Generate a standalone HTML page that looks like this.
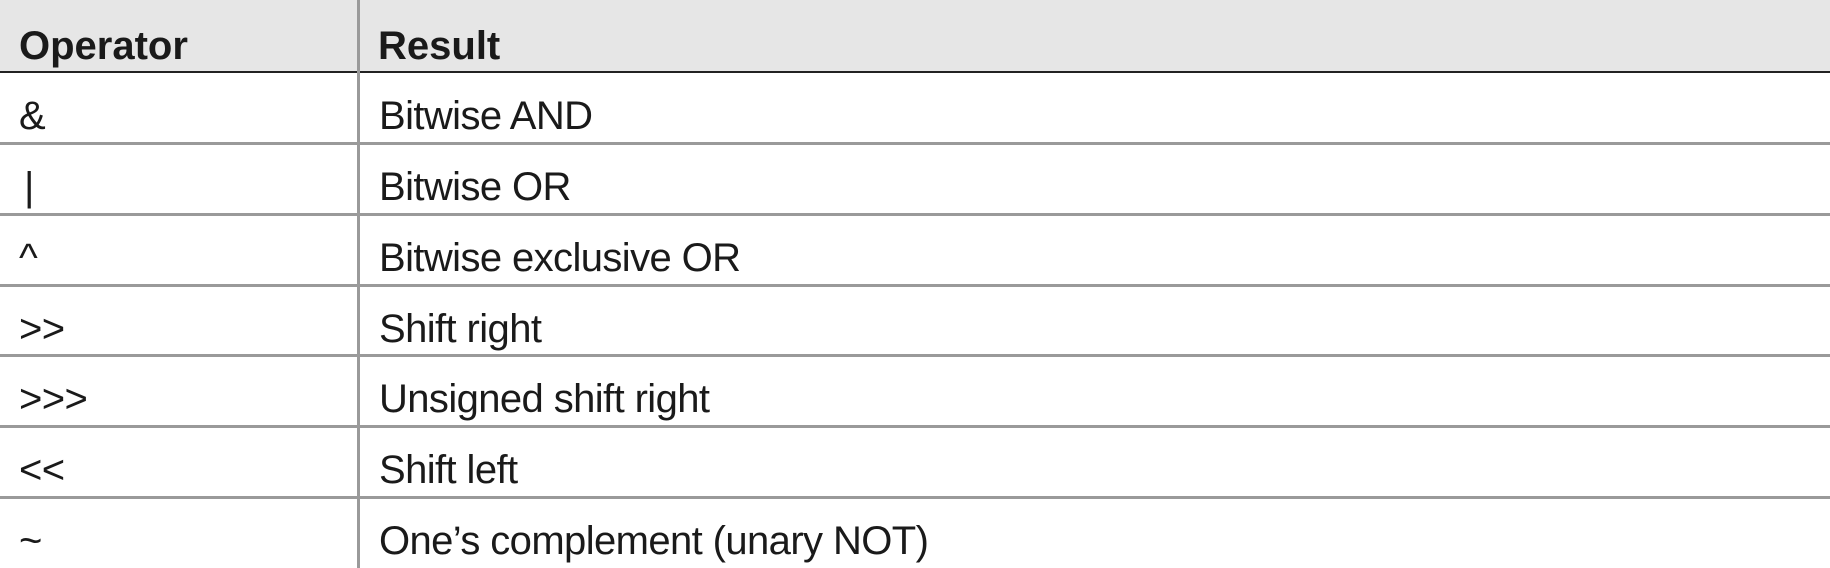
<!DOCTYPE html>
<html><head><meta charset="utf-8"><style>
html,body{margin:0;padding:0;background:#fff;}
body{width:1830px;height:568px;position:relative;overflow:hidden;font-family:"Liberation Sans",sans-serif;color:#1a1a1a;}
.hdr{position:absolute;left:0;top:0;width:1830px;height:71px;background:#e6e6e6;}
.hl{position:absolute;left:0;top:71px;width:1830px;height:2px;background:#222;}
.rl{position:absolute;left:0;width:1830px;height:3px;background:#9a9a9a;}
.vl{position:absolute;left:357px;top:0;width:3px;height:568px;background:#9a9a9a;}
.t{position:absolute;font-size:40px;line-height:40px;white-space:nowrap;letter-spacing:-0.6px;}
.b{font-weight:bold;letter-spacing:0;}
</style></head><body>
<div class="hdr"></div>
<div class="hl"></div>
<div class="rl" style="top:142px"></div>
<div class="rl" style="top:213px"></div>
<div class="rl" style="top:284px"></div>
<div class="rl" style="top:354px"></div>
<div class="rl" style="top:425px"></div>
<div class="rl" style="top:496px"></div>
<div class="vl"></div>

<div class="t b" style="left:19px;top:26px">Operator</div>
<div class="t b" style="left:378px;top:26px">Result</div>

<div class="t" style="left:19px;top:96px">&amp;</div>
<div class="t" style="left:379px;top:96px">Bitwise AND</div>
<div class="t" style="left:24px;top:167px">|</div>
<div class="t" style="left:379px;top:167px">Bitwise OR</div>
<div class="t" style="left:19px;top:238px">^</div>
<div class="t" style="left:379px;top:238px">Bitwise exclusive OR</div>
<div class="t" style="left:19px;top:309px">&gt;&gt;</div>
<div class="t" style="left:379px;top:309px">Shift right</div>
<div class="t" style="left:19px;top:379px">&gt;&gt;&gt;</div>
<div class="t" style="left:379px;top:379px">Unsigned shift right</div>
<div class="t" style="left:19px;top:450px">&lt;&lt;</div>
<div class="t" style="left:379px;top:450px">Shift left</div>
<div class="t" style="left:19px;top:521px">~</div>
<div class="t" style="left:379px;top:521px">One’s complement (unary NOT)</div>
</body></html>
